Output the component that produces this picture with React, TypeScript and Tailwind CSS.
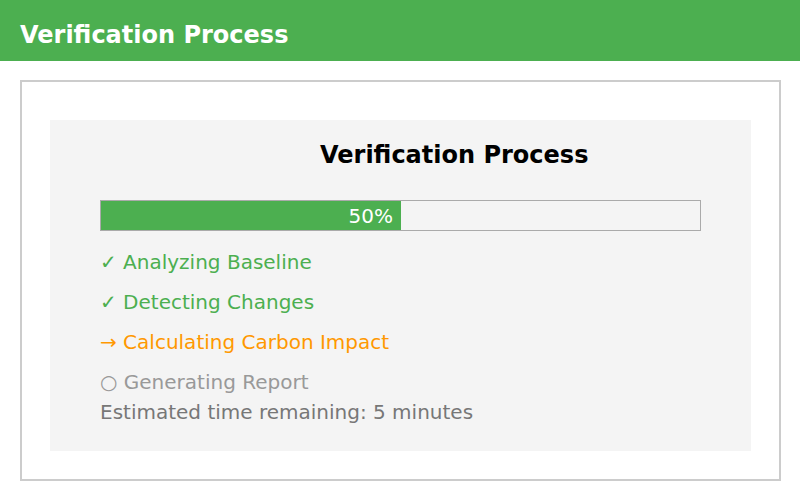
import React from "react";

export default function App() {
  const font = { fontFamily: '"DejaVu Sans", Verdana, sans-serif' };
  return (
    <div className="w-[800px] h-[500px] bg-white" style={font}>
      <div className="h-[61px] bg-[#4CAF50] px-5 pt-[23px]">
        <h1 className="text-white font-bold text-[24px] leading-[24px]">Verification Process</h1>
      </div>
      <div className="pt-[19px] pl-5">
        <div className="w-[761px] h-[401px] border-2 border-[#ccc] pt-[38px] pl-[28px]">
          <div className="w-[701px] h-[331px] bg-[#f4f4f4] pl-[50px] pt-[20px]">
            <h2 className="pl-[220px] text-black font-bold text-[24px] leading-[30px]">Verification Process</h2>
            <div className="mt-[30px] w-[601px] h-[31px] border border-[#aaa] flex">
              <div className="w-[300px] h-full bg-[#4CAF50] flex items-center justify-end pr-2 text-white text-[20px] leading-none">50%</div>
            </div>
            <div className="mt-[11px] flex flex-col text-[20px] leading-[40px]">
              <div className="text-[#4CAF50]">✓ Analyzing Baseline</div>
              <div className="text-[#4CAF50]">✓ Detecting Changes</div>
              <div className="text-[#FF9800]">→ Calculating Carbon Impact</div>
              <div className="text-[#999]">○ Generating Report</div>
              <div className="text-[#777] -mt-[10px]">Estimated time remaining: 5 minutes</div>
            </div>
          </div>
        </div>
      </div>
    </div>
  );
}
